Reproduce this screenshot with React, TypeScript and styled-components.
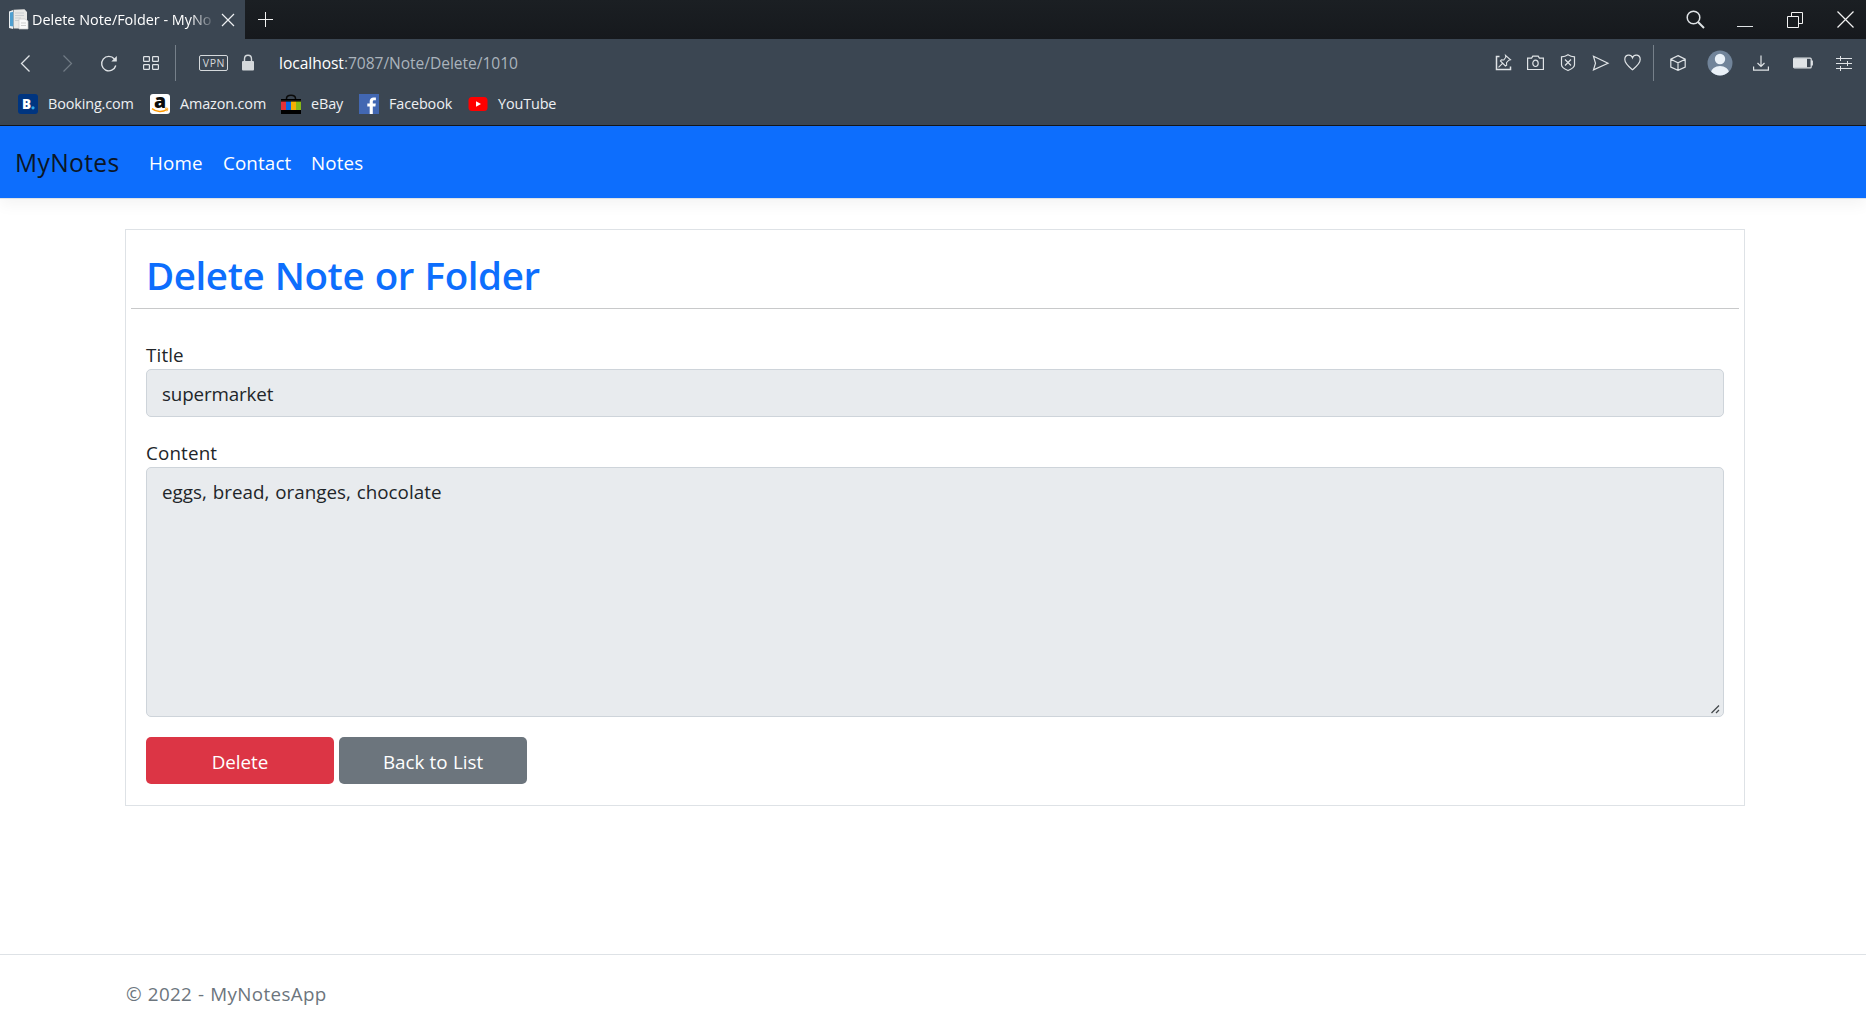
import React from "react";
import styled, { createGlobalStyle } from "styled-components";

const Global = createGlobalStyle`
  *, *::before, *::after { box-sizing: border-box; }
  html, body { margin: 0; padding: 0; }
  body {
    background: #fff;
    color: #212529;
    font-family: "Open Sans", "Noto Sans", sans-serif;
    font-size: 18.8px;
    line-height: 30px;
    overflow: hidden;
  }
  svg { display: block; flex: none; overflow: visible; }
`;

const Window = styled.div`
  width: 1866px;
  height: 1029px;
  display: flex;
  flex-direction: column;
  overflow: hidden;
`;

/* ---------- browser chrome ---------- */

const Chrome = styled.header`
  height: 126px;
  flex: none;
  background: #3b4652;
  border-bottom: 1px solid #14171b;
  color: #f4f6f7;
  font-size: 14.4px;
  line-height: 20px;
`;

const TabStrip = styled.div`
  height: 39px;
  display: flex;
  align-items: center;
  background: linear-gradient(#1b1f23, #16191d);
`;

const Tab = styled.div`
  width: 245px;
  height: 39px;
  display: flex;
  align-items: center;
  padding: 0 10px 0 8px;
  background: #3b4652;
`;

const TabTitle = styled.span`
  width: 181px;
  margin-left: 3px;
  margin-right: 1px;
  white-space: nowrap;
  color: #fff;
  letter-spacing: 0;
  mask-image: linear-gradient(90deg, #000 158px, transparent 184px);
`;

const Slot = styled.span<{ $w: number; $ml?: number }>`
  width: ${(p) => p.$w}px;
  margin-left: ${(p) => p.$ml ?? 0}px;
  flex: none;
  display: flex;
  justify-content: center;
`;

const WindowButtons = styled.div`
  margin-left: auto;
  padding-right: 12px;
  display: flex;
  align-items: center;
`;

const AddressBar = styled.div`
  height: 48px;
  display: flex;
  align-items: center;
  padding: 0 14px 0 17px;
`;

const Divider = styled.span<{ $ml: number }>`
  width: 1px;
  height: 36px;
  margin-left: ${(p) => p.$ml}px;
  background: #76808a;
`;

const Vpn = styled.span`
  width: 29px;
  height: 16px;
  margin: -1px 0 0 23px;
  border: 1px solid #d5d9dc;
  border-radius: 2px;
  color: #d5d9dc;
  font-size: 10.5px;
  line-height: 14px;
  letter-spacing: 0.6px;
  text-align: center;
  padding-left: 1px;
`;

const Url = styled.span`
  margin-left: 25px;
  font-size: 15.6px;
  letter-spacing: -0.05px;
  color: #aab3bc;
  b { font-weight: 400; color: #fff; }
`;

const AddressActions = styled.div`
  margin-left: auto;
  display: flex;
  align-items: center;
`;

const Bookmarks = styled.nav`
  height: 38px;
  display: flex;
  align-items: center;
  padding: 0 0 4px 18px;
`;

const Bookmark = styled.a<{ $w: number }>`
  width: ${(p) => p.$w}px;
  display: flex;
  align-items: center;
  gap: 10px;
  white-space: nowrap;
  letter-spacing: -0.12px;
  color: #eef0f2;
`;

/* ---------- page ---------- */

const Navbar = styled.nav`
  height: 73px;
  flex: none;
  display: flex;
  align-items: center;
  padding: 1px 0 0 15px;
  background: #0d6efd;
  border-bottom: 1px solid #dee2e6;
  box-shadow: 0 5px 15px rgba(0, 0, 0, 0.05);
`;

const Brand = styled.a`
  width: 134px;
  font-size: 24.6px;
  font-weight: 400;
  letter-spacing: 0.35px;
  color: #0b1626;
`;

const NavLink = styled.a<{ $w: number }>`
  width: ${(p) => p.$w}px;
  color: #fff;
  letter-spacing: 0.12px;
`;

const Card = styled.main`
  width: 1620px;
  height: 577px;
  flex: none;
  margin: 30px 0 0 125px;
  border: 1px solid #dee2e6;
  padding: 0 5px;
`;

const Heading = styled.h1`
  height: 79px;
  margin: 0;
  padding: 21px 0 0 15px;
  border-bottom: 1px solid #c8c9ca;
  color: #0d6efd;
  font-size: 38.5px;
  font-weight: 600;
  line-height: 48px;
  letter-spacing: -0.42px;
  word-spacing: 1px;
`;

const Form = styled.form`
  display: flex;
  flex-direction: column;
  padding: 30px 15px 0;
`;

const Label = styled.label`
  height: 30px;
  line-height: 32px;
  letter-spacing: 0.15px;
`;

const Field = styled.div<{ $h: number; $mb: number }>`
  position: relative;
  height: ${(p) => p.$h}px;
  margin-bottom: ${(p) => p.$mb}px;
  padding: 9px 15px;
  border: 1px solid #ced4da;
  border-radius: 5px;
  background: #e8ebee;
  letter-spacing: -0.14px;
`;

const TextArea = styled(Field)`
  letter-spacing: 0.04px;
  word-spacing: 0.8px;
`;

const Grip = styled.svg`
  position: absolute;
  right: 3px;
  bottom: 2px;
`;

const Actions = styled.div`
  display: flex;
  gap: 5px;
`;

const Button = styled.button<{ $bg: string }>`
  width: 188px;
  height: 47px;
  padding: 2px 0 0;
  border: 0;
  border-radius: 5px;
  background: ${(p) => p.$bg};
  color: #fff;
  font: inherit;
  letter-spacing: 0;
  word-spacing: 0.4px;
`;

const Footer = styled.footer`
  height: 75px;
  flex: none;
  margin-top: auto;
  padding-left: 126px;
  border-top: 1px solid #dee2e6;
  color: #6c757d;
  line-height: 79px;
  letter-spacing: 0.36px;
  word-spacing: 0.6px;
`;

/* ---------- icons ---------- */

type IconProps = { w?: number; h?: number; sw?: number; color?: string; children: React.ReactNode };
const Icon = ({ w = 16, h = 16, sw = 1.2, color = "#dfe3e6", children }: IconProps) => (
  <svg width={w} height={h} viewBox={`0 0 ${w} ${h}`} fill="none" stroke={color} strokeWidth={sw}>
    {children}
  </svg>
);

const PageIcon = () => (
  <svg width="21" height="21" viewBox="0 0 21 21">
    <path d="M1 2.5 5 1v19l-4-1z" fill="#e9eef1" />
    <path d="M2 3.5 5.500 2.8v14.7L2 17z" fill="#4e9fd0" />
    <path d="M5.500 .8 16.5.3 19 3v16.5H5.500z" fill="#e8e8e6" />
    <path d="M7 4h9M7 6.5h9M7 9h6M7 11.5h4" stroke="#c9ced1" />
    <path d="M11 10h6l3 2v8h-9z" fill="#fafafa" stroke="#c8c9c9" strokeWidth=".7" />
    <path d="M13 14h5M13 16.5h5" stroke="#cfcfcf" />
  </svg>
);

const BookingIcon = () => (
  <svg width="20" height="20" viewBox="0 0 20 20">
    <rect width="20" height="20" rx="3" fill="#003580" />
    <text x="4" y="15" fontFamily="Open Sans" fontWeight="800" fontSize="13.5" fill="#fff">B</text>
    <circle cx="15" cy="13.8" r="1.6" fill="#2fa8e8" />
  </svg>
);

const AmazonIcon = () => (
  <svg width="20" height="20" viewBox="0 0 20 20">
    <rect width="20" height="20" rx="3" fill="#fff" />
    <text x="4" y="13.6" fontFamily="Open Sans" fontWeight="800" fontSize="19" textLength="12" lengthAdjust="spacingAndGlyphs" fill="#0b0b0b">a</text>
    <path d="M2 14.6c4.5 3.6 10.5 3.8 15 .8" stroke="#f90" strokeWidth="1.5" fill="none" />
    <path d="M15 14.4c1-.4 2.300-.4 2.700 0 .2.700-.2 2-1 2.800" stroke="#f90" fill="none" />
  </svg>
);

const EbayIcon = () => (
  <svg width="20" height="20" viewBox="0 0 20 20">
    <path d="M5.500 6V4.500c0-4.500 9-4.500 9 0V6" fill="none" stroke="#0a0a0a" strokeWidth="1.500" />
    <path d="M0 5h20v15H0z" fill="#000" />
    <path d="M0 7.500h5V16H0z" fill="#e53238" />
    <path d="M5 7.500h5V16H5z" fill="#0968e4" />
    <path d="M10 7.500h5V16h-5z" fill="#f5af02" />
    <path d="M15 7.500h5V16h-5z" fill="#86b817" />
    <path d="M0 6.700h20" stroke="#3a332c" strokeWidth=".6" />
  </svg>
);

const FacebookIcon = () => (
  <svg width="20" height="20" viewBox="0 0 20 20">
    <path d="M0 0h20v20H0z" fill="#4267b2" />
    <path d="M10.700 20v-7.600H8.300V9.400h2.400V7.300c0-2.600 1.600-3.900 3.900-3.900 1.100 0 2 .1 2.300.2v2.700h-1.600c-1.200 0-1.500.6-1.500 1.500v1.600h3l-.4 3h-2.600V20z" fill="#fff" />
  </svg>
);

const YoutubeIcon = () => (
  <svg width="20" height="20" viewBox="0 0 20 20">
    <rect x=".5" y="3" width="19" height="14" rx="3.500" fill="#f00" />
    <path d="m8 7.200 5 2.800-5 2.800z" fill="#fff" />
  </svg>
);

const bookmarks = [
  { name: "Booking.com", width: 132, icon: <BookingIcon /> },
  { name: "Amazon.com", width: 131, icon: <AmazonIcon /> },
  { name: "eBay", width: 78, icon: <EbayIcon /> },
  { name: "Facebook", width: 109, icon: <FacebookIcon /> },
  { name: "YouTube", width: 100, icon: <YoutubeIcon /> },
];

const links = [
  { name: "Home", width: 74 },
  { name: "Contact", width: 88 },
  { name: "Notes", width: 80 },
];

export default function App() {
  return (
    <Window>
      <Global />
      <Chrome>
        <TabStrip>
          <Tab>
            <PageIcon />
            <TabTitle>Delete Note/Folder - MyNo</TabTitle>
            <Slot $w={14} $ml={8}>
              <Icon w={14} h={14} color="#eef0f2"><path d="m1 1 12 12M13 1 1 13" /></Icon>
            </Slot>
          </Tab>
          <Slot $w={15} $ml={13}>
            <Icon w={15} h={15} sw={1} color="#f2f2f2"><path d="M7.500 0v15M0 7.500h15" /></Icon>
          </Slot>
          <WindowButtons>
            <Slot $w={19}>
              <Icon w={19} h={19} sw={1.5}><circle cx="7.500" cy="7.500" r="6.300" /><path d="m12 12 6 6" strokeWidth="1.900" /></Icon>
            </Slot>
            <Slot $w={16} $ml={32}><Icon h={19} sw={1}><path d="M0 16.500h16" /></Icon></Slot>
            <Slot $w={16} $ml={34}>
              <Icon sw={1} color="#f2f2f2"><path d="M.5 4.500h11v11H.5zM4.500 4.500v-4h11v11h-4" /></Icon>
            </Slot>
            <Slot $w={17} $ml={34}><Icon w={17} h={17} color="#f2f2f2"><path d="m.5.500 16 16m0-16-16 16" /></Icon></Slot>
          </WindowButtons>
        </TabStrip>
        <AddressBar>
          <Slot $w={16}><Icon h={17} sw={1.300}><path d="m12.500.5-8 8 8 8" /></Icon></Slot>
          <Slot $w={16} $ml={26}><Icon h={17} color="#717b85"><path d="m4.500.5 8 8-8 8" /></Icon></Slot>
          <Slot $w={18} $ml={25}>
            <Icon w={18} h={17} sw={1.400}><path d="M15.800 10.500a7.200 7.200 0 1 1-1.400-6.500" /><path d="M16.800 1v5.500h-5.500z" fill="#dfe3e6" stroke="none" /></Icon>
          </Slot>
          <Slot $w={16} $ml={25}>
            <Icon sw={1.200}>
              <rect x=".6" y="1.600" width="5.800" height="4.800" rx=".6" /><rect x="9.600" y="1.600" width="5.800" height="4.800" rx=".6" />
              <rect x=".6" y="9.600" width="5.800" height="4.800" rx=".6" /><rect x="9.600" y="9.600" width="5.800" height="4.800" rx=".6" />
            </Icon>
          </Slot>
          <Divider $ml={16} />
          <Vpn>VPN</Vpn>
          <Slot $w={12} $ml={14}>
            <Icon w={12} h={18} sw={1.400} color="#d5d9dc"><path d="M2.500 8V5c0-5 7-5 7 0v3" /><rect y="7" width="12" height="9.500" rx="1" fill="#d5d9dc" stroke="none" /></Icon>
          </Slot>
          <Url><b>localhost</b>:7087/Note/Delete/1010</Url>
          <AddressActions>
            <Slot $w={17}>
              <Icon w={17} h={18} sw={1.100}>
                <path d="M4.500 2.500h-3v13h14v-3" strokeWidth="1.500" />
                <path d="m10.500 1.300 5 4.500-1.700.4-2.300 2.500.2 2.500-1.300.8-5-5 1-1.200 2.400.2 2-2.800zM7.500 9.300l-4 4" />
              </Icon>
            </Slot>
            <Slot $w={17} $ml={15}>
              <Icon w={17} h={18}><path d="M.6 4.100h4l1.200-2h5.400l1.200 2h4v11.400H.6z" /><ellipse cx="8.500" cy="9.300" rx="2.700" ry="3.200" /></Icon>
            </Slot>
            <Slot $w={16} $ml={16}>
              <Icon h={18}><path d="M8 .8c2.300 1.600 4.500 2 6.500 2v8c0 2.800-3.500 4.500-6.500 5.700-3-1.200-6.500-2.900-6.500-5.700v-8c2 0 4.200-.4 6.500-2z" /><path d="m5 5.500 6 6m0-6-6 6" /></Icon>
            </Slot>
            <Slot $w={17} $ml={16}><Icon w={17} h={18}><path d="m1.500 2.300 14.500 7-14.500 6.500 2-6.500z" /></Icon></Slot>
            <Slot $w={17} $ml={15}>
              <Icon w={17} h={18}><path d="M8.500 15.800C5 12.800.8 9.500.8 5.500c0-5 6-6 7.700-1.700 1.700-4.300 7.700-3.300 7.700 1.700 0 4-4.200 7.300-7.700 10.300z" /></Icon>
            </Slot>
            <Divider $ml={12} />
            <Slot $w={16} $ml={16}><Icon><path d="m8 .6 7.200 3.600v7.900L8 15.400.8 12.100V4.200zM.8 4.200 8 7.800l7.200-3.600M8 7.800v7.600" /></Icon></Slot>
            <Slot $w={26} $ml={21}>
              <svg width="26" height="26" viewBox="0 0 26 26">
                <defs><clipPath id="avatar"><circle cx="13" cy="13" r="12.500" /></clipPath></defs>
                <g clipPath="url(#avatar)">
                  <path d="M0 0h26v26H0z" fill="#71849a" />
                  <circle cx="13" cy="9" r="5.200" fill="#eaf1f8" />
                  <ellipse cx="13" cy="22.500" rx="9" ry="6.500" fill="#eaf1f8" />
                </g>
              </svg>
            </Slot>
            <Slot $w={16} $ml={20}><Icon><path d="M8 .5v11M4.500 8 8 11.500 11.500 8M.6 11.500v3.700h14.800v-3.700" /></Icon></Slot>
            <Slot $w={20} $ml={24}>
              <Icon w={20} h={12}><rect x=".6" y="1.100" width="17.600" height="9.800" rx="1" /><path d="M1 1.500h13v9H1z" fill="#dfe3e6" stroke="none" /><path d="M18.900 3.500v5" strokeWidth="2" /></Icon>
            </Slot>
            <Slot $w={16} $ml={23}>
              <Icon sw={1}><path d="M0 3.500h16M0 8.500h16M0 13.500h16M4.500 1v5M11.500 6v5M4.500 11v5" /></Icon>
            </Slot>
          </AddressActions>
        </AddressBar>
        <Bookmarks>
          {bookmarks.map((b) => (
            <Bookmark key={b.name} $w={b.width}>{b.icon}<span>{b.name}</span></Bookmark>
          ))}
        </Bookmarks>
      </Chrome>

      <Navbar>
        <Brand>MyNotes</Brand>
        {links.map((l) => <NavLink key={l.name} $w={l.width}>{l.name}</NavLink>)}
      </Navbar>

      <Card>
        <Heading>Delete Note or Folder</Heading>
        <Form>
          <Label>Title</Label>
          <Field $h={48} $mb={20}>supermarket</Field>
          <Label>Content</Label>
          <TextArea $h={250} $mb={20}>
            eggs, bread, oranges, chocolate
            <Grip width="9" height="9" viewBox="0 0 9 9" stroke="#454a4d" strokeWidth="1.300">
              <path d="m.5 8 7.500-7.500M5 8l3-3" />
            </Grip>
          </TextArea>
          <Actions>
            <Button type="button" $bg="#dc3545">Delete</Button>
            <Button type="button" $bg="#6c757d">Back to List</Button>
          </Actions>
        </Form>
      </Card>

      <Footer>© 2022 - MyNotesApp</Footer>
    </Window>
  );
}
